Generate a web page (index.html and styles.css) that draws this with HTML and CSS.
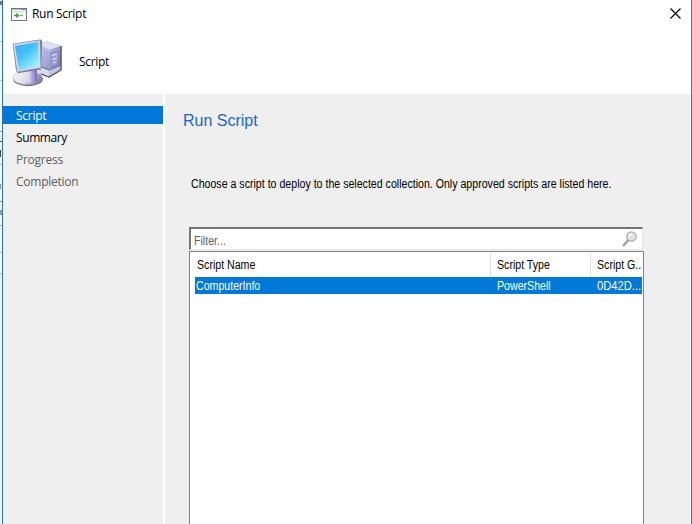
FILE: index.html
```
<!DOCTYPE html>
<html lang="en">
<head>
<meta charset="utf-8">
<title>Run Script</title>
<link rel="stylesheet" href="styles.css">
</head>
<body>
<div class="desktop">
<div class="behind"></div>
<main class="window">
  <header class="header">
    <div class="titlebar">
      <svg class="app-icon" width="16" height="13" viewBox="0 0 16 13">
        <rect x=".5" y=".5" width="15" height="12" fill="#fafafa" stroke="#73797b"/>
        <path d="M1 1.5h14" stroke="#b9c0c5"/><path d="M10 1.5h1M12 1.5h1M14 1.5h1" stroke="#59636c"/>
        <path d="M1 3.5h14" stroke="#d3d9dd"/>
        <path d="M3 7.5h4M5.3 5.5l2.2 2-2.2 2" stroke="#37a637" stroke-width="1.4" fill="none"/>
        <path d="M9 7.5h3" stroke="#7fa884" stroke-width="1.2"/>
      </svg>
      <span class="title">Run Script</span>
      <svg class="close" width="11" height="11" viewBox="0 0 11 11"><path d="M.5.5l10 10M10.5.5l-10 10" stroke="#000" stroke-width="1.15"/></svg>
    </div>
    <div class="banner">
      <svg class="computer" width="50" height="48" viewBox="0 0 50 48">
        <defs>
          <linearGradient id="screen" x1="0" y1="0" x2=".7" y2="1"><stop offset="0" stop-color="#3fa9ee"/><stop offset=".45" stop-color="#41c0fa"/><stop offset="1" stop-color="#a5f2ff"/></linearGradient>
          <linearGradient id="side" x1="0" y1="0" x2="1" y2="1"><stop offset="0" stop-color="#c9cced"/><stop offset="1" stop-color="#7479bb"/></linearGradient>
          <linearGradient id="front" x1="0" y1="0" x2="1" y2="1"><stop offset="0" stop-color="#b7b9e3"/><stop offset=".6" stop-color="#8d90c7"/><stop offset="1" stop-color="#686b9c"/></linearGradient>
          <linearGradient id="base" x1="0" y1="0" x2="1" y2=".3"><stop offset="0" stop-color="#fafafa"/><stop offset=".6" stop-color="#dcdce7"/><stop offset="1" stop-color="#8982b6"/></linearGradient>
          <linearGradient id="neck"><stop offset="0" stop-color="#e4e2f4"/><stop offset="1" stop-color="#7169bd"/></linearGradient>
        </defs>
        <path d="M27 5l8-2 14 4v24L37 38l-10-4z" fill="url(#side)" stroke="#a0a3c4" stroke-width=".7"/>
        <path d="M27 5l8-2 14 4-12 4z" fill="#dfe0f1"/>
        <path d="M37 11l12-4v24l-12 7z" fill="url(#front)"/>
        <path d="M27 27l10 4v7l-10-4z" fill="#d8d9e9"/><path d="M37 31l12-5v5l-12 7z" fill="#c0c2df"/>
        <path d="M27 27l10 4 12-5" fill="none" stroke="#6c7096" stroke-width="1.1"/>
        <path d="M49 7v24L37 38l-8-3" fill="none" stroke="#4b4e68" stroke-width="1.3"/>
        <path d="M39 14l7-2v13l-7 3z" fill="#989ed3" stroke="#7c80b7" stroke-width=".6"/>
        <path d="M40 16.5l5-1.5M40 20.5l5-1.5M41 24l3-1" stroke="#e1e5fc" stroke-width="1.3"/>
        <ellipse cx="16" cy="40" rx="15" ry="7.2" fill="#6e6a80"/>
        <ellipse cx="15.5" cy="39" rx="14.5" ry="6.7" fill="url(#base)" stroke="#a5a5ad" stroke-width=".5"/>
        <path d="M16 31l9-2v13q-4 3-9 1z" fill="url(#neck)"/>
        <path d="M1 5L29 .5l1 2-1 28L6 34 4 31z" fill="#6e7194"/>
        <path d="M1 5L28 1l1 28L5 33z" fill="#d9dae8" stroke="#8d90a8" stroke-width=".7"/>
        <path d="M3 7l23-4 1 24L7 31z" fill="url(#screen)"/>
      </svg>
      <span class="banner-label">Script</span>
    </div>
  </header>
  <div class="body">
    <nav class="steps">
      <div class="step active">Script</div>
      <div class="step ready">Summary</div>
      <div class="step">Progress</div>
      <div class="step">Completion</div>
    </nav>
    <section class="page">
      <h1>Run Script</h1>
      <p><span class="label">Choose a script to deploy to the selected collection. Only approved scripts are listed here.</span></p>
      <div class="filter">
        <span class="label">Filter...</span>
        <svg class="lens" width="16" height="16" viewBox="0 0 16 16"><path d="M1 15l5.5-6" stroke="#999" stroke-width="2.2"/><circle cx="9.5" cy="5.5" r="4.7" fill="#e3e3e3" stroke="#acacac" stroke-width="1.3"/><path d="M7 5q.5-2 3-2" fill="none" stroke="#fff" stroke-width="1.3"/></svg>
      </div>
      <div class="list">
        <div class="row head"><span class="cell"><span class="label">Script Name</span></span><span class="cell"><span class="label">Script Type</span></span><span class="cell"><span class="label">Script G..</span></span></div>
        <div class="row selected"><span class="cell"><span class="label">ComputerInfo</span></span><span class="cell"><span class="label">PowerShell</span></span><span class="cell"><span class="label wide">0D42D...</span></span></div>
      </div>
    </section>
  </div>
</main>
</div>
</body>
</html>
```
FILE: styles.css
```
* { box-sizing: border-box; }
body { margin: 0; overflow: hidden; font: 12px/14px "Liberation Sans", Arial, sans-serif; color: #000; }
.desktop { display: flex; width: 692px; height: 524px; }
.behind {
  width: 2px;
  background:
    linear-gradient(#777, #777) 0 1px / 2px 4px no-repeat,
    linear-gradient(#bbb, #bbb) 0 41px / 2px 1px no-repeat,
    linear-gradient(#bbb, #bbb) 0 80px / 2px 1px no-repeat,
    linear-gradient(#999, #999) 0 131px / 2px 1px no-repeat,
    linear-gradient(#555, #555) 0 141px / 2px 1px no-repeat,
    linear-gradient(#444, #444) 0 150px / 1px 7px no-repeat,
    linear-gradient(#bbb, #bbb) 0 164px / 2px 1px no-repeat,
    linear-gradient(#888, #888) 0 184px / 1px 5px no-repeat,
    linear-gradient(#888, #888) 0 201px / 2px 1px no-repeat,
    linear-gradient(#999, #999) 0 210px / 2px 5px no-repeat,
    linear-gradient(#aaa, #aaa) 0 225px / 2px 1px no-repeat,
    linear-gradient(#bbb, #bbb) 0 252px / 2px 1px no-repeat,
    linear-gradient(#bbb, #bbb) 0 273px / 2px 1px no-repeat,
    linear-gradient(#f3f4f6 274px, #efefef 274px);
}
.window { display: flex; flex-direction: column; width: 690px; border-left: 1px solid #2675b5; border-right: 1px solid #367ba8; background: #fff; }
.header { height: 94px; font-family: "Open Sans", "Noto Sans", sans-serif; font-size: 12px; line-height: 18px; }
.titlebar { display: flex; align-items: center; height: 28px; padding: 0 10px 0 8px; }
.title { margin-left: 5px; letter-spacing: -.3px; }
.close { margin-left: auto; margin-top: -2px; }
.banner { display: flex; align-items: center; height: 66px; padding: 2px 0 0 9px; }
.banner-label { margin-left: 17px; letter-spacing: -.3px; }
.computer { margin-top: 1px; }
.body { display: flex; flex: 1; min-height: 0; }
.steps { width: 160px; padding-top: 12px; background: #efefef; font: 12px/20px "Open Sans", "Noto Sans", sans-serif; color: #606060; }
.step { height: 18px; margin-bottom: 4px; padding-left: 13px; letter-spacing: -.25px; }
.step.active { background: #0078d7; color: #fff; }
.step.ready { color: #000; letter-spacing: -.4px; }
.page { display: flex; flex-direction: column; width: 525px; margin-left: 2px; padding: 17px 48px 0 25px; background: #efefef; border-right: 1px solid #d9f2fa; }
h1 { margin: 0 0 0 -7px; height: 20px; font-size: 16px; line-height: 20px; font-weight: 400; color: #1769c5; white-space: nowrap; }
p { margin: 46px 0 0 1px; height: 14px; white-space: nowrap; }
/* Narrow dialog face */
.label { display: inline-block; transform: scaleX(.884); transform-origin: 0 50%; }
.label.wide { transform: scaleX(.93); }
.filter { display: flex; flex: none; justify-content: space-between; width: 454px; height: 23px; margin: 36px 0 0 -1px; padding: 4px 4px 0 3px; background: #fff; border: 1px solid #e4e4e4; border-top: 2px solid #737373; border-left: 2px solid #777; color: #606060; line-height: 16px; }
.lens { margin-top: -2px; }
.list { flex: 1; width: 455px; margin: 1px 0 0 -1px; padding: 1px 1px 0 5px; background: #fff; border: 1px solid #828282; border-bottom: 0; overflow: hidden; }
.row { display: grid; grid-template-columns: 295px 100px 1fr; height: 17px; line-height: 18px; white-space: nowrap; }
.head { height: 24px; line-height: 24px; }
.cell { padding-left: 1px; }
.cell + .cell { padding-left: 7px; }
.head .cell { padding-left: 2px; }
.head .cell + .cell { border-left: 1px solid #e1e1e1; padding-left: 6px; }
.selected { background: #0078d7; color: #fff; }
```
